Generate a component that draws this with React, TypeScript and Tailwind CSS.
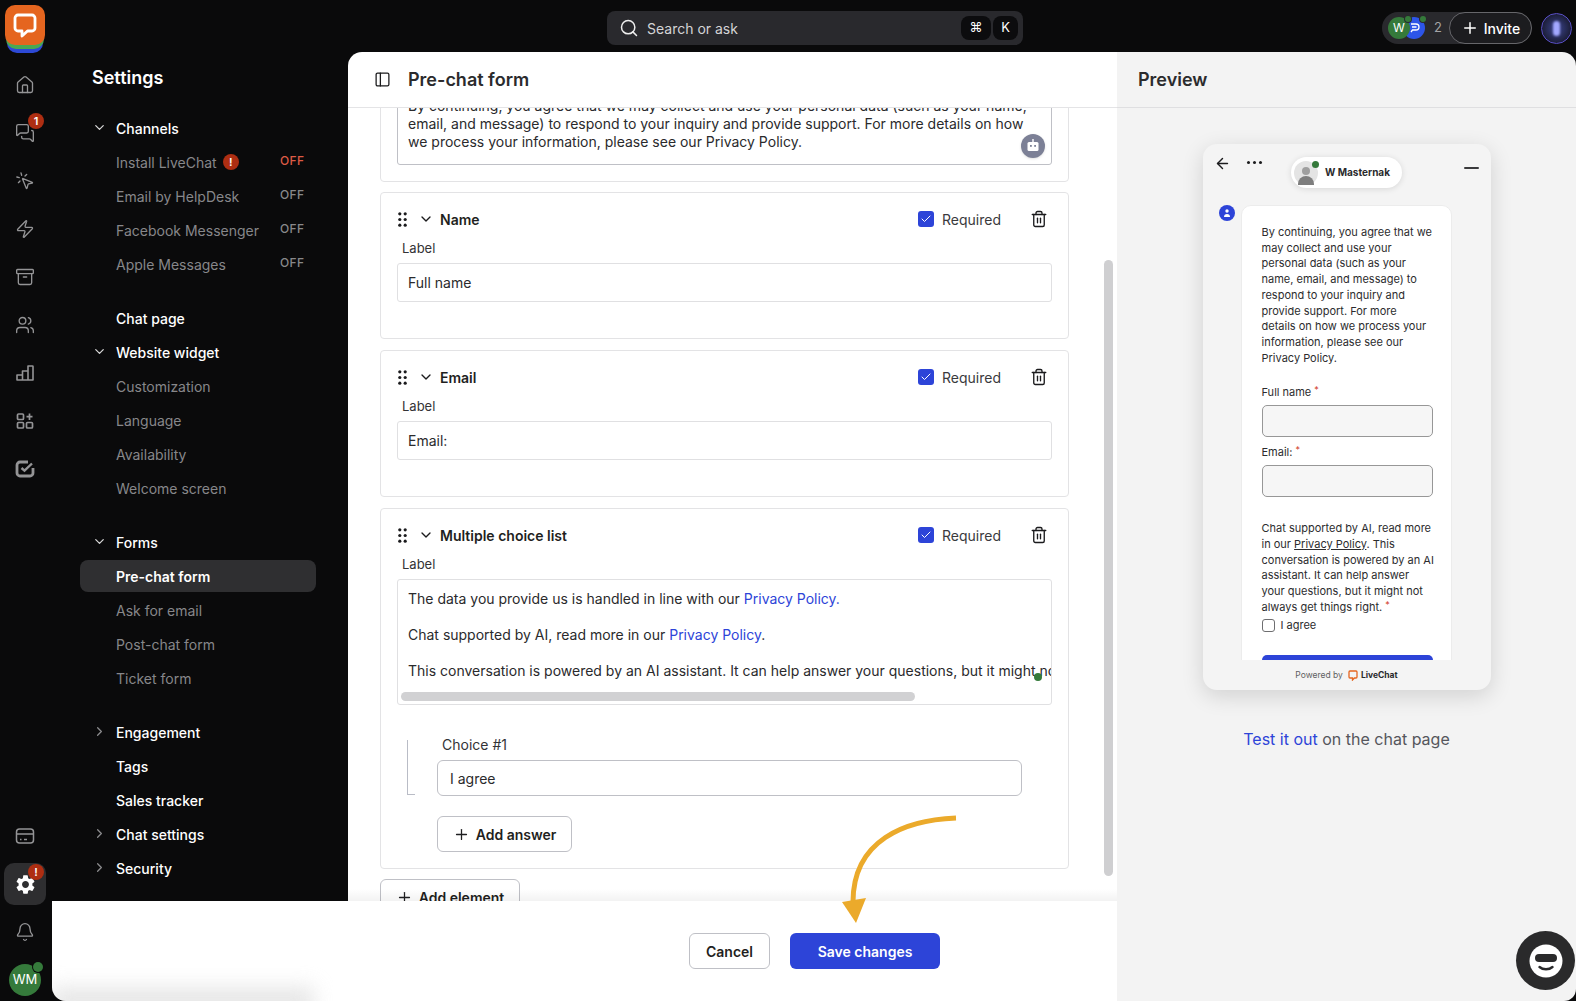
import { Archive, ArrowLeft, Bell, Check, ChevronDown, ChevronRight, Home, MessagesSquare, MousePointerClick, PanelLeft, Plus, Search, Trash2, Users, Zap } from 'lucide-react'
import { MdSettings } from 'react-icons/md'

const navGroups = [
  {
    items: [
      { label: 'Channels', head: true, open: true },
      { label: 'Install LiveChat', alert: true, off: 'red' },
      { label: 'Email by HelpDesk', off: 'gray' },
      { label: 'Facebook Messenger', off: 'gray' },
      { label: 'Apple Messages', off: 'gray' },
    ],
  },
  {
    items: [
      { label: 'Chat page', head: true },
      { label: 'Website widget', head: true, open: true },
      { label: 'Customization' },
      { label: 'Language' },
      { label: 'Availability' },
      { label: 'Welcome screen' },
    ],
  },
  {
    items: [
      { label: 'Forms', head: true, open: true },
      { label: 'Pre-chat form', active: true },
      { label: 'Ask for email' },
      { label: 'Post-chat form' },
      { label: 'Ticket form' },
    ],
  },
  {
    items: [
      { label: 'Engagement', head: true, closed: true },
      { label: 'Tags', head: true },
      { label: 'Sales tracker', head: true },
      { label: 'Chat settings', head: true, closed: true },
      { label: 'Security', head: true, closed: true },
    ],
  },
]

function Badge({ children, className }: { children: string; className: string }) {
  return (
    <span className={`flex h-4 w-4 items-center justify-center rounded-full bg-[#ae2e12] text-[11px] font-semibold text-white ${className}`}>
      {children}
    </span>
  )
}

function RailIcon({ children, active, badge }: { children: React.ReactNode; active?: boolean; badge?: string }) {
  return (
    <div className="relative flex h-[48px] w-[52px] items-center justify-center text-[#949496]">
      {active && <div className="absolute left-[4px] top-[3px] h-[42px] w-[42px] rounded-[10px] bg-[#2e2e30]" />}
      <div className="relative -ml-[2px]">{children}</div>
      {badge && <Badge className="absolute left-[28px] top-[4px]">{badge}</Badge>}
    </div>
  )
}

function Rail() {
  return (
    <div className="flex h-full w-[52px] shrink-0 flex-col bg-[#0a0a0b] pb-[5px]">
      <div className="relative ml-[5px] mt-[5px] h-[48px] w-[40px]">
        <div className="absolute left-[2px] top-[8px] h-[40px] w-[36px] rounded-[10px] bg-[#2d49d6]" />
        <div className="absolute left-[1px] top-[4px] h-[40px] w-[38px] rounded-[10px] bg-[#4aa853]" />
        <div className="absolute left-0 top-0 flex h-[40px] w-[40px] items-center justify-center rounded-[10px] bg-[#e5651f]">
          <svg width="26" height="26" viewBox="0 0 26 26" fill="none">
            <path d="M6 3h14a3 3 0 0 1 3 3v10a3 3 0 0 1-3 3h-4.500L10 24v-5H6a3 3 0 0 1-3-3V6a3 3 0 0 1 3-3z" stroke="#fff" strokeWidth="2.800" strokeLinejoin="round" />
          </svg>
        </div>
      </div>
      <div className="mt-[8px] flex flex-col">
        <RailIcon><Home size={20} strokeWidth={1.6} /></RailIcon>
        <RailIcon badge="1"><MessagesSquare size={20} strokeWidth={1.6} /></RailIcon>
        <RailIcon><MousePointerClick size={20} strokeWidth={1.6} /></RailIcon>
        <RailIcon><Zap size={20} strokeWidth={1.6} /></RailIcon>
        <RailIcon><Archive size={20} strokeWidth={1.6} /></RailIcon>
        <RailIcon><Users size={20} strokeWidth={1.6} /></RailIcon>
        <RailIcon>
          <svg width="20" height="20" viewBox="0 0 20 20" fill="none" stroke="currentColor" strokeWidth="1.600" strokeLinejoin="round">
            <path d="M2 17v-5h5.500v5zM7.500 17V8H13v9zM13 17V3h4.500a.5.5 0 0 1 .5.5V17z" />
          </svg>
        </RailIcon>
        <RailIcon>
          <svg width="20" height="20" viewBox="0 0 20 20" fill="none" stroke="currentColor" strokeWidth="1.700">
            <rect x="2.500" y="3" width="6" height="5.500" rx="1" />
            <rect x="2.500" y="11.500" width="6" height="5.500" rx="1" />
            <rect x="11.500" y="11.500" width="6" height="5.500" rx="1" />
            <path d="M14.500 2.500v6.500M11.500 5.700h6" />
          </svg>
        </RailIcon>
        <RailIcon>
          <svg width="20" height="20" viewBox="0 0 20 20" fill="none" stroke="currentColor">
            <path d="M13 3H5a3 3 0 0 0-3 3v8a3 3 0 0 0 3 3h10a3 3 0 0 0 3-3V9" strokeWidth="2.800" />
            <path d="M6.500 9l3 2.700L17 4.500" strokeWidth="2.400" />
          </svg>
        </RailIcon>
      </div>
      <div className="mt-auto flex flex-col">
        <RailIcon>
          <svg width="20" height="20" viewBox="0 0 20 20" fill="none" stroke="currentColor" strokeWidth="1.500">
            <rect x="1.500" y="3" width="17" height="14" rx="3" />
            <path d="M1.500 8h17M5 13.500h1.500M9 13.500h3" />
          </svg>
        </RailIcon>
        <RailIcon active badge="!">
          <MdSettings size={23} className="text-white" />
        </RailIcon>
        <RailIcon><Bell size={20} strokeWidth={1.6} /></RailIcon>
        <div className="relative ml-[9px] mt-[8px] flex h-[32px] w-[32px] items-center justify-center rounded-full bg-[#357a3b] text-[13px] text-white">
          WM
          <span className="absolute -right-[2px] -top-[2px] h-[10px] w-[10px] rounded-full bg-[#357a3b] ring-1 ring-[#0a0a0b]" />
        </div>
      </div>
    </div>
  )
}

function NavRow({ item }: { item: any }) {
  return (
    <div className={`relative flex items-center text-[14px] ${item.active ? 'my-[1px] h-[32px] rounded-[8px] bg-[#2f2f31]' : 'h-[34px]'}`}>
      {item.open && <ChevronDown size={15} className="absolute left-[12px] -mt-[2px] text-[#d8d8d8]" />}
      {item.closed && <ChevronRight size={15} className="absolute left-[12px] -mt-[2px] text-[#8c8c8e]" />}
      <span className={`ml-[36px] ${item.head || item.active ? 'font-medium text-white' : 'text-[#87878a]'} ${item.active ? 'font-semibold' : ''}`}>
        {item.label}
      </span>
      {item.alert && <Badge className="ml-[6px]">!</Badge>}
      {item.off && (
        <span className={`absolute left-[200px] -mt-[2px] text-[12px] font-medium tracking-[0.4px] ${item.off === 'red' ? 'text-[#dd5a45]' : 'text-[#88888a]'}`}>
          OFF
        </span>
      )}
    </div>
  )
}

function Sidebar() {
  return (
    <div className="w-[296px] shrink-0 bg-[#0a0a0b] pl-[28px] pr-[32px]">
      <div className="h-[59px] pl-[12px] pt-[12px] text-[18px] font-semibold leading-[28px] text-white">Settings</div>
      <div className="flex flex-col gap-[20px]">
        {navGroups.map((group, i) => (
          <div key={i}>
            {group.items.map(item => (
              <NavRow key={item.label} item={item} />
            ))}
          </div>
        ))}
      </div>
    </div>
  )
}

function Grip() {
  return (
    <svg width="9" height="15" viewBox="0 0 9 15" fill="#1b1b1d">
      <circle cx="1.800" cy="1.800" r="1.600" />
      <circle cx="7.200" cy="1.800" r="1.600" />
      <circle cx="1.800" cy="7.500" r="1.600" />
      <circle cx="7.200" cy="7.500" r="1.600" />
      <circle cx="1.800" cy="13.200" r="1.600" />
      <circle cx="7.200" cy="13.200" r="1.600" />
    </svg>
  )
}

function ElementHead({ title }: { title: string }) {
  return (
    <div className="flex h-[22px] items-center">
      <div className="ml-[-2px] flex w-[15px] justify-center"><Grip /></div>
      <ChevronDown size={16} strokeWidth={2} className="ml-[8px] text-[#1b1b1d]" />
      <span className="ml-[6px] text-[14px] font-semibold text-[#1f1f21]">{title}</span>
      <div className="ml-auto flex h-[16px] w-[16px] items-center justify-center rounded-[3px] bg-[#2d44d8]">
        <Check size={12} strokeWidth={2} className="text-white" />
      </div>
      <span className="ml-[8px] text-[14px] text-[#3a3a3d]">Required</span>
      <Trash2 size={18} strokeWidth={1.8} className="ml-[29px] mr-[4px] text-[#1b1b1d]" />
    </div>
  )
}

function FieldCard({ title, value }: { title: string; value: string }) {
  return (
    <div className="h-[147px] rounded-[4px] border border-[#e3e3e5] px-[16px] pt-[15px]">
      <ElementHead title={title} />
      <div className="ml-[5px] mt-[8px] text-[13px] leading-[20px] text-[#333336]">Label</div>
      <div className="mt-[5px] flex h-[39px] items-center rounded-[3px] border border-[#e0e0e2] px-[10px] text-[14px] text-[#2a2a2c]">{value}</div>
    </div>
  )
}

function MainPanel() {
  return (
    <div className="relative flex min-w-0 flex-1 flex-col overflow-hidden rounded-tl-[14px] bg-white">
      <div className="flex h-[56px] shrink-0 items-center border-b border-[#e4e4e6] pl-[26px]">
        <PanelLeft size={17} strokeWidth={1.8} className="text-[#1b1b1d]" />
        <span className="ml-[17px] text-[18px] font-semibold text-[#2b2b2d]">Pre-chat form</span>
      </div>
      <div className="min-h-0 flex-1 overflow-hidden pl-[32px]">
        <div className="-mt-[48px] flex w-[689px] flex-col gap-[11px]">
          <div className="-mb-[1px] rounded-[4px] border border-[#e3e3e5] px-[16px] pb-[16px] pt-[26px]">
            <div className="relative h-[78px] rounded-[3px] border border-[#bfc0c6] px-[10px] pt-[9px] text-[14px] leading-[18px] text-[#2a2a2c]">
              By continuing, you agree that we may collect and use your personal data (such as your name, email, and message) to respond to your inquiry and provide support. For more details on how we process your information, please see our Privacy Policy.
              <div className="absolute bottom-[6px] right-[6px] flex h-[24px] w-[24px] items-center justify-center rounded-full bg-[#7c8096] shadow">
                <svg width="14" height="14" viewBox="0 0 14 14" fill="#fff">
                  <rect x="6.300" y="0" width="1.400" height="3" />
                  <rect x="1.500" y="3" width="11" height="9" rx="1.500" />
                  <rect x="4" y="6" width="1.800" height="1.800" fill="#7c8096" />
                  <rect x="8.200" y="6" width="1.800" height="1.800" fill="#7c8096" />
                </svg>
              </div>
            </div>
          </div>
          <FieldCard title="Name" value="Full name" />
          <FieldCard title="Email" value="Email:" />
          <div className="rounded-[4px] border border-[#e3e3e5] px-[16px] pb-[16px] pt-[15px]">
            <ElementHead title="Multiple choice list" />
            <div className="ml-[5px] mt-[8px] text-[13px] leading-[20px] text-[#333336]">Label</div>
            <div className="relative mt-[5px] h-[126px] overflow-hidden whitespace-nowrap rounded-[3px] border border-[#e0e0e2] pl-[10px] pt-[10px] text-[14px] leading-[18px] text-[#2a2a2c]">
              <p>The data you provide us is handled in line with our <span className="text-[#2d44d8]">Privacy Policy.</span></p>
              <p className="mt-[18px]">Chat supported by AI, read more in our <span className="text-[#2d44d8]">Privacy Policy</span>.</p>
              <p className="mt-[18px]">This conversation is powered by an AI assistant. It can help answer your questions, but it might not always get things right.</p>
              <div className="absolute bottom-[3px] left-[3px] h-[9px] w-[514px] rounded-full bg-[#d1d1d3]" />
              <div className="absolute right-[9px] top-[93px] h-[8px] w-[8px] rounded-full bg-[#357a3b]" />
            </div>
            <div className="ml-[10px] mt-[30px] flex">
              <div className="mt-[5px] h-[55px] w-[8px] border-b border-l border-[#b9bcc6]" />
              <div className="ml-[22px]">
                <div className="pl-[5px] text-[14px] leading-[20px] text-[#333336]">Choice #1</div>
                <div className="mt-[5px] flex h-[36px] w-[585px] items-center rounded-[6px] border border-[#bfc0c6] px-[12px] text-[14px] text-[#2a2a2c]">I agree</div>
                <button className="mt-[20px] flex h-[36px] w-[135px] items-center justify-center gap-[6px] rounded-[6px] border border-[#bfc0c6] text-[14px] font-semibold text-[#1f1f21]">
                  <Plus size={17} strokeWidth={1.8} />
                  Add answer
                </button>
              </div>
            </div>
          </div>
          <button className="-mt-[1px] flex h-[36px] w-[140px] items-center justify-center gap-[6px] rounded-[6px] border border-[#bfc0c6] text-[14px] font-semibold text-[#1f1f21]">
            <Plus size={17} strokeWidth={1.8} />
            Add element
          </button>
        </div>
      </div>
      <div className="absolute bottom-[25px] right-[4px] top-[208px] w-[9px] rounded-full bg-[#cfcfd1]" />
      <div className="absolute bottom-0 left-0 right-0 h-[12px] bg-gradient-to-b from-transparent to-black/5" />
    </div>
  )
}

function Footer() {
  return (
    <div className="relative flex h-[100px] shrink-0 items-start gap-[20px] overflow-hidden rounded-bl-[14px] bg-white pl-[637px] pt-[32px]">
      <div className="absolute -bottom-[14px] left-0 h-[28px] w-[262px] bg-[#dcdcdc] opacity-70 blur-[10px]" />
      <button className="relative h-[36px] w-[81px] rounded-[6px] border border-[#bfc0c6] bg-white text-[14px] font-semibold text-[#1f1f21]">Cancel</button>
      <button className="relative h-[36px] w-[150px] rounded-[6px] bg-[#2d44d8] text-[14px] font-semibold text-white">Save changes</button>
    </div>
  )
}

function Required() {
  return <span className="relative -top-[3px] ml-[3px] text-[9px] text-[#d13a1e]">*</span>
}

function WidgetPreview() {
  return (
    <div className="mt-[36px] flex h-[546px] w-[288px] flex-col overflow-hidden rounded-[14px] bg-[#f4f4f4] shadow-[0_6px_22px_rgba(0,0,0,0.14)]">
      <div className="grid h-[61px] shrink-0 grid-cols-[1fr_auto_1fr]">
        <div className="flex items-start gap-[16px] pl-[11px] pt-[11px]">
          <ArrowLeft size={17} strokeWidth={2} className="text-[#1b1b1d]" />
          <span className="mt-[6px] flex gap-[3px]">
            <i className="h-[3px] w-[3px] rounded-full bg-[#1b1b1d]" />
            <i className="h-[3px] w-[3px] rounded-full bg-[#1b1b1d]" />
            <i className="h-[3px] w-[3px] rounded-full bg-[#1b1b1d]" />
          </span>
        </div>
        <div className="mt-[13px] flex h-[31px] w-[111px] items-center rounded-full bg-white pl-[3px] shadow-[0_1px_6px_rgba(0,0,0,0.12)]">
          <div className="relative h-[24px] w-[24px] rounded-full bg-[#e4e4e4]">
            <div className="absolute left-[8px] top-[6px] h-[8px] w-[8px] rounded-full bg-[#9f9f9f]" />
            <div className="absolute left-[4px] top-[15px] h-[9px] w-[16px] rounded-t-full bg-[#7e7e7e]" />
            <div className="absolute -right-[1px] top-0 h-[7px] w-[7px] rounded-full bg-[#357a3b]" />
          </div>
          <span className="ml-[7px] whitespace-nowrap text-[10px] font-bold text-[#2a2a2c]">W Masternak</span>
        </div>
        <div className="flex justify-end pr-[12px] pt-[23px]">
          <div className="h-[2px] w-[15px] rounded bg-[#3a3a3c]" />
        </div>
      </div>
      <div className="flex h-[455px] shrink-0 gap-[6px] overflow-hidden pl-[16px]">
        <div className="flex h-[16px] w-[16px] shrink-0 items-center justify-center rounded-full bg-[#2d44d8]">
          <svg width="8" height="8" viewBox="0 0 8 8" fill="#fff">
            <circle cx="4" cy="2" r="1.700" />
            <path d="M1 8a3 3 0 0 1 6 0z" />
          </svg>
        </div>
        <div className="h-[480px] w-[211px] rounded-t-[10px] border border-[#ececec] bg-white pl-[20px] pr-[17.5px] pt-[19px] text-[11px] leading-[15.7px] text-[#2c2c2e]">
          <p>By continuing, you agree that we may collect and use your personal data (such as your name, email, and message) to respond to your inquiry and provide support. For more details on how we process your information, please see our Privacy Policy.</p>
          <div className="mt-[18px] leading-[16px]">Full name<Required /></div>
          <div className="mt-[4px] h-[32px] w-[171px] rounded-[5px] border-[1.5px] border-[#979797] bg-[#f6f6f6]" />
          <div className="mt-[7px] leading-[16px]">Email:<Required /></div>
          <div className="mt-[4px] h-[32px] w-[171px] rounded-[5px] border-[1.5px] border-[#979797] bg-[#f6f6f6]" />
          <p className="-mr-[1.2px] mt-[24px]">Chat supported by AI, read more in our <span className="underline">Privacy Policy</span>. This conversation is powered by an AI assistant. It can help answer your questions, but it might not always get things right.<Required /></p>
          <div className="mt-[3px] flex h-[14px] items-center">
            <span className="h-[13px] w-[13px] rounded-[3px] border-[1.5px] border-[#6e6e70]" />
            <span className="ml-[6px]">I agree</span>
          </div>
          <div className="mt-[22px] h-[40px] w-[171px] rounded-[5px] bg-[#2d44d8]" />
        </div>
      </div>
      <div className="flex flex-1 items-center justify-center text-[8.5px] text-[#5f5f62]">
        <span>Powered by</span>
        <svg className="ml-[5px]" width="10" height="11" viewBox="0 0 10 11" fill="none">
          <path d="M2 1h6a1 1 0 0 1 1 1v5a1 1 0 0 1-1 1H6.500L4.500 10V8H2a1 1 0 0 1-1-1V2a1 1 0 0 1 1-1z" stroke="#e5651f" strokeWidth="1.300" />
        </svg>
        <span className="ml-[3px] font-bold text-[#2a2a2c]">LiveChat</span>
      </div>
    </div>
  )
}

function Preview() {
  return (
    <div className="relative flex w-[459px] shrink-0 flex-col overflow-hidden rounded-br-[12px] rounded-tr-[14px] bg-[#f3f3f3]">
      <div className="flex h-[56px] shrink-0 items-center border-b border-[#dfdfe1] pl-[21px] text-[18px] font-semibold text-[#2b2b2d]">Preview</div>
      <div className="flex flex-col items-center">
        <WidgetPreview />
        <div className="mt-[37px] text-[16px] leading-[24px] text-[#55565c]">
          <span className="text-[#2d44d8]">Test it out</span> on the chat page
        </div>
      </div>
      <div className="absolute bottom-[11px] right-[1px] flex h-[59px] w-[59px] items-center justify-center rounded-full bg-[#2a2a2b]">
        <svg width="34" height="34" viewBox="0 0 34 34">
          <circle cx="17" cy="17" r="16.500" fill="#fff" />
          <rect x="6" y="10" width="22" height="8" rx="4" fill="#2a2a2b" />
          <path d="M10.500 23c3.500 3 9.500 3 13 0" stroke="#2a2a2b" strokeWidth="2.400" fill="none" strokeLinecap="round" />
        </svg>
      </div>
    </div>
  )
}

function TopBar() {
  return (
    <div className="relative flex h-[52px] shrink-0 items-center bg-[#0a0a0b] pt-[4px]">
      <div className="ml-[555px] flex h-[34px] w-[416px] items-center rounded-[8px] bg-[#29292d] pl-[12px] pr-[5px]">
        <Search size={20} strokeWidth={1.8} className="text-[#eeeeee]" />
        <span className="ml-[8px] text-[14px] text-[#d4d4d6]">Search or ask</span>
        <span className="ml-auto flex h-[24px] w-[30px] items-center justify-center rounded-[8px] bg-[#0c0c0e] text-[13px] text-white">⌘</span>
        <span className="ml-[2px] flex h-[24px] w-[25px] items-center justify-center rounded-[8px] bg-[#0c0c0e] text-[13px] text-white">K</span>
      </div>
      <div className="ml-[359px] flex h-[32px] w-[150px] items-center rounded-full bg-[#29292d] pl-[6px]">
        <div className="relative z-10 flex h-[22px] w-[22px] items-center justify-center rounded-full bg-[#357a3b] text-[12px] text-white">
          W
          <span className="absolute -right-[1px] -top-[1px] h-[6px] w-[6px] rounded-full bg-[#357a3b] ring-1 ring-[#29292d]" />
        </div>
        <div className="relative -ml-[7px] flex h-[22px] w-[22px] items-center justify-center rounded-full bg-[#2d55e8]">
          <svg width="12" height="12" viewBox="0 0 12 12" fill="none" stroke="#fff" strokeWidth="1.300">
            <path d="M3 2h5a2.500 2.500 0 0 1 0 6H4.500L3 10M4 5h4.500" />
          </svg>
          <span className="absolute -right-[1px] -top-[1px] h-[6px] w-[6px] rounded-full bg-[#357a3b] ring-1 ring-[#29292d]" />
        </div>
        <span className="ml-[9px] text-[13px] text-[#a4a4a6]">2</span>
        <div className="ml-auto flex h-[32px] w-[83px] items-center justify-center gap-[5px] rounded-full border border-[#66666a] bg-[#1c1c1f] text-[14px] font-medium text-white">
          <Plus size={18} strokeWidth={2} />
          Invite
        </div>
      </div>
      <div className="ml-[9px] flex h-[31px] w-[31px] items-center justify-center rounded-full border-[1.5px] border-[#5a50c8] bg-[radial-gradient(circle,#3c4590_0%,#1c1e38_70%)]">
        <div className="h-[15px] w-[7px] rounded-full bg-[#a3a8ff] blur-[1px]" />
      </div>
    </div>
  )
}

export default function App() {
  return (
    <div className="relative flex h-[1001px] w-[1576px] overflow-hidden bg-[#0a0a0b] font-['Inter',sans-serif]">
      <Rail />
      <div className="flex min-w-0 flex-1 flex-col">
        <TopBar />
        <div className="flex min-h-0 flex-1">
          <div className="flex w-[1065px] shrink-0 flex-col">
            <div className="flex min-h-0 flex-1">
              <Sidebar />
              <MainPanel />
            </div>
            <Footer />
          </div>
          <Preview />
        </div>
      </div>
      {/* annotation arrow over the footer */}
      <svg className="pointer-events-none absolute left-[830px] top-[810px]" width="140" height="120" viewBox="830 810 140 120" fill="none">
        <path d="M956 818C905 820 853 840 853 902" stroke="#ebaa2b" strokeWidth="5" />
        <path d="M842 902L866 898L856 923z" fill="#ebaa2b" />
      </svg>
    </div>
  )
}
